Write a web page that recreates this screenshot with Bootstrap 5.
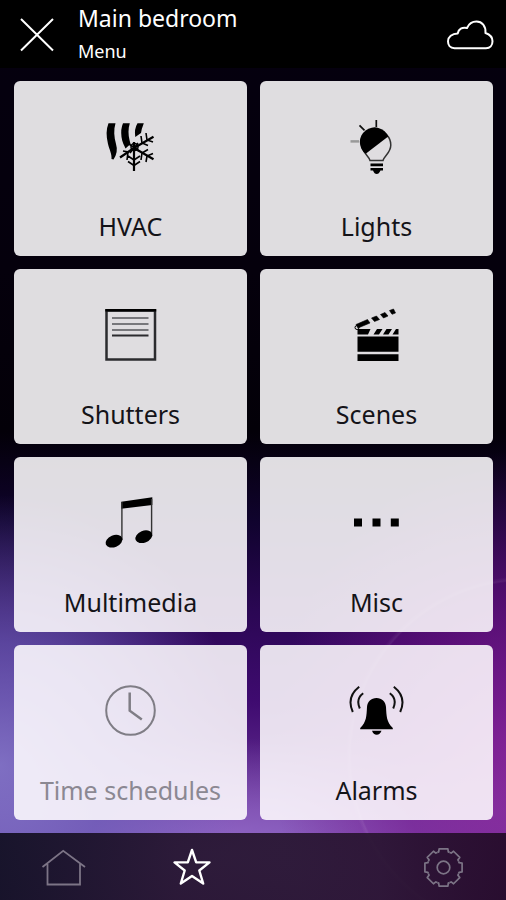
<!DOCTYPE html>
<html lang="en">
<head>
<meta charset="utf-8">
<meta name="viewport" content="width=device-width, initial-scale=1">
<title>Main bedroom</title>
<link rel="stylesheet" href="https://cdn.jsdelivr.net/npm/bootstrap@5.3.0/dist/css/bootstrap.min.css">
<style>
body { font-family: "Noto Sans", "Open Sans", sans-serif; background: #000; }
.app-shell {
  background:
    radial-gradient(circle 180px at 104% 84%, rgba(255,255,255,0) 97%, rgba(255,255,255,.07) 98%, rgba(255,255,255,0) 100%),
    radial-gradient(ellipse 48% 30% at 0% 85%, rgba(130,118,200,.9), rgba(108,95,185,.7) 45%, rgba(50,25,140,0)),
    radial-gradient(ellipse 50% 34% at 104% 84%, rgba(150,40,160,.75), rgba(120,20,140,.55) 50%, rgba(80,0,100,0)),
    radial-gradient(ellipse 90% 13% at 42% 95%, rgba(150,110,205,.95), rgba(110,60,170,0)),
    linear-gradient(180deg, #05000f 0%, #05000c 30%, #030008 48%, #10032e 58%, #2b0754 68%, #3f0b70 78%, #6b3598 90%, #6b3598 100%);
}
.top-bar { min-height: 68px; padding: 2px 12px 0 20px; gap: 24px; }
.room-name { font-size: 23px; line-height: 32px; font-weight: 400; }
.page-name { font-size: 18px; line-height: 34px; }
.tiles { padding: 13px 13px 13px 14px; gap: 13px; display: grid; grid-template-columns: 1fr 1fr; grid-auto-rows: 1fr; }
.tile {
  --bs-btn-bg: rgba(255,253,255,.875); --bs-btn-color: #141318;
  --bs-btn-hover-bg: rgba(255,255,255,.94); --bs-btn-hover-color: #000;
  --bs-btn-active-bg: #fff; --bs-btn-active-color: #000;
  --bs-btn-disabled-bg: rgba(255,253,255,.875); --bs-btn-disabled-color: #8b8892; --bs-btn-disabled-opacity: 1;
  --bs-btn-border-width: 0; --bs-btn-border-radius: 6px;
  --bs-btn-padding-x: 8px; --bs-btn-padding-y: 0;
  --bs-btn-font-size: 25px; --bs-btn-line-height: 34px;
  gap: 32px; min-height: 174px; padding-top: 36px; padding-bottom: 12px;
}
.bottom-bar { min-height: 67px; background: linear-gradient(90deg, rgba(14,12,28,.9), rgba(34,18,42,.9) 35%, rgba(36,18,42,.88) 75%, rgba(32,10,36,.9)); }
.tab-link { color: #7c7486; }
.tab-link.active { color: #fff; }
svg { display: block; }
</style>
</head>
<body>
<div class="app-shell min-vh-100 d-flex flex-column">
  <header class="top-bar bg-black text-white d-flex align-items-center">
    <button type="button" class="btn p-0 border-0 text-white" aria-label="Close">
      <svg width="34" height="34" viewBox="0 0 34 34" fill="none" stroke="currentColor" stroke-width="2"><path d="M1 1 33 32.500M33 1 1 32.500"/></svg>
    </button>
    <div class="flex-grow-1">
      <h1 class="room-name m-0">Main bedroom</h1>
      <div class="page-name">Menu</div>
    </div>
    <button type="button" class="btn p-0 border-0 text-white" aria-label="Weather">
      <svg width="48" height="32" viewBox="0 0 48 32" fill="none" stroke="currentColor" stroke-width="2" stroke-linejoin="round"><path d="M8.500 29.200C4 29.200 2 26 2 22.300C2 18 6 14.500 11.700 14.500C12.500 10 16 8 21 9C23 4.500 26.500 2.500 30.500 2.500C36 2.500 40 7 39.500 14C44 15.500 46.500 18.500 46.500 22.300C46.500 26.500 44 29.200 40 29.200Z"/></svg>
    </button>
  </header>

  <main class="tiles flex-grow-1">
    <button type="button" class="tile btn d-flex flex-column align-items-center">
      <svg width="60" height="60" viewBox="0 0 60 60" fill="#000" aria-hidden="true">
        <path d="M7.500 6.300H14.500C12.500 13 13 20 15 27Q17.500 35 12.500 42.500L10.500 42C11 37 8.500 33 7 27Q4 15 7.500 6.300ZM22 6.300H28.800C27 12 27.300 18 28.500 23L29.500 27 24.500 31.500C23.500 29 21 25 20.500 20Q19.500 12 22 6.300ZM36.500 6.300H42.800L40.800 12 40 16 34.300 20Q33 12 36.500 6.300Z"/>
        <g fill="none" stroke="#000" stroke-width="2.200">
          <path d="M33 31V54M33 31 52.500 19.800M33 31 52.500 42.300M33 31 19 40.500M33 31V25"/>
          <path stroke-width="1.600" d="M27 39 33 43 39 39M27 44.500 33 48.500 39 44.500M40 19 41 26 47 28.500M45 16 46 23 52 25M40 43 41 36 47 32.500M45 45 46 39 52 36.500M22 34 27 35 26 43M28 27 38 34M37 26 29 36"/>
          <circle cx="33.500" cy="30" r="3.500" stroke-width="1.500"/>
        </g>
      </svg>
      <span>HVAC</span>
    </button>
    <button type="button" class="tile btn d-flex flex-column align-items-center">
      <svg width="60" height="60" viewBox="0 0 60 60" aria-hidden="true">
        <path d="M23 43.500C22 39 15.200 36 15.200 28A14.300 14.300 0 0 1 43.800 28C43.800 36 37 39 36 43.500Z" fill="none" stroke="#333" stroke-width="1.500"/>
        <path d="M18.700 36.800A14.700 14.700 0 1 1 41.200 19.600Z"/>
        <path d="M23.500 46.600H36V49.300H23.500ZM23.500 51H36V53.500H33.500Q32 57 29.700 57T26 53.500H23.500Z"/>
        <path d="M29.300 3V10M12.500 8.300 17.500 13.300" stroke="#111" stroke-width="1.700"/>
        <path d="M3.500 24.400H12" stroke="#999" stroke-width="2.500"/>
      </svg>
      <span>Lights</span>
    </button>
    <button type="button" class="tile btn d-flex flex-column align-items-center">
      <svg width="60" height="60" viewBox="0 0 60 60" fill="none" aria-hidden="true">
        <path d="M5.500 5.500H54V54.500H5.500Z" stroke="#2b2b2e" stroke-width="2.500"/>
        <path d="M4.300 5.300H55.200" stroke="#000" stroke-width="2.500"/>
        <path d="M11 13H47.500M11 19H47.500M11 25H47.500" stroke="#77777b" stroke-width="2"/>
        <path d="M11 30.400H47.500" stroke="#2b2b2e" stroke-width="2"/>
      </svg>
      <span>Shutters</span>
    </button>
    <button type="button" class="tile btn d-flex flex-column align-items-center">
      <svg width="60" height="60" viewBox="0 0 60 60" aria-hidden="true">
        <path d="M10.500 31.500H51.500V46.800H10.500ZM10.500 49.200H51.500V56H10.500Z"/>
        <path d="M10.500 24H23.500L21 29.500H10.500ZM30 24H35.500L32 29.500H26.500ZM39.500 24H45L41.500 29.500H36ZM49 24H51.500V29.500H45.500Z"/>
        <path d="M9 19.500 20.500 14.500 23 18 11 23ZM24.500 13 29.500 11 32.500 14.500 27.500 16.500ZM33.500 9.500 38 7.500 41 11 36.500 13ZM42.500 5.500 46.500 4 48.500 8 45 9.300Z" stroke="#000" stroke-width=".6"/>
        <circle cx="10" cy="22.500" r="2" fill="none" stroke="#000"/>
      </svg>
      <span>Scenes</span>
    </button>
    <button type="button" class="tile btn d-flex flex-column align-items-center">
      <svg width="60" height="60" viewBox="0 0 60 60" aria-hidden="true">
        <path d="M20.200 8.700 51.300 4.300V12L20.200 15.800Z"/>
        <path d="M20.900 9V47M50.600 6V43" stroke="#333" stroke-width="1.400"/>
        <ellipse cx="13" cy="48.200" rx="8.800" ry="5.900" transform="rotate(-22 13 48.200)"/>
        <ellipse cx="42.800" cy="43.700" rx="8.800" ry="5.900" transform="rotate(-22 42.800 43.700)"/>
      </svg>
      <span>Multimedia</span>
    </button>
    <button type="button" class="tile btn d-flex flex-column align-items-center">
      <svg width="60" height="60" viewBox="0 0 60 60" aria-hidden="true"><path d="M7 25.500h8v8h-8zM25.500 25.500h8v8h-8zM43.800 25.500h8v8h-8z"/></svg>
      <span>Misc</span>
    </button>
    <button type="button" class="tile btn d-flex flex-column align-items-center" disabled>
      <svg width="60" height="60" viewBox="0 0 60 60" fill="none" stroke="#7f7d85" aria-hidden="true">
        <circle cx="29.500" cy="29.500" r="24.300" stroke-width="2"/>
        <path d="M28.700 11.500V29.700L40.800 38.500" stroke-width="2.500"/>
      </svg>
      <span>Time schedules</span>
    </button>
    <button type="button" class="tile btn d-flex flex-column align-items-center">
      <svg width="60" height="60" viewBox="0 0 60 60" aria-hidden="true">
        <path d="M29.500 17C35 17 38.500 20.500 39 26C39.500 35 39.500 41 45.800 47V48.300H13.200V47C19.500 41 19.500 35 20 26C20.500 20.500 24 17 29.500 17ZM25 49.700H34.500Q33 53.700 29.700 53.700T25 49.700Z"/>
        <path d="M12.200 5.700Q-1 16 5.800 31M16.200 12.300Q8.500 18 12.800 27.500M46.800 5.700Q60 16 53.200 31M42.800 12.300Q50.500 18 46.200 27.500" fill="none" stroke="#111" stroke-width="2"/>
      </svg>
      <span>Alarms</span>
    </button>
  </main>

  <nav class="bottom-bar d-flex align-items-center" aria-label="Sections">
    <div class="row g-0 w-100">
      <div class="col-3 d-flex justify-content-center">
        <a href="#home" class="tab-link" aria-label="Home"><svg width="48" height="48" viewBox="0 0 48 48" fill="none" stroke="currentColor" stroke-width="1.800"><path d="M3.500 24 24.200 7.800 46 24M8.500 21V41.500H41V21"/></svg></a>
      </div>
      <div class="col-3 d-flex justify-content-center">
        <a href="#favourites" class="tab-link active" aria-current="page" aria-label="Favourites"><svg width="48" height="48" viewBox="0 0 48 48" fill="none" stroke="currentColor" stroke-width="2.400" stroke-linejoin="round"><path d="M26 7 30.200 19.400H43.500L33.300 27.500 37.200 40.500 26 33 14.800 40.500 18.700 27.500 8.500 19.400H21.800Z"/></svg></a>
      </div>
      <div class="col-3 offset-3 d-flex justify-content-center">
        <a href="#settings" class="tab-link" aria-label="Settings"><svg width="48" height="48" viewBox="0 0 48 48" fill="none" stroke="currentColor" stroke-width="1.700" stroke-linejoin="round">
          <defs><path id="tooth" d="M-6.200-15.100-4.800-15.600-4.400-18.600H4.400L4.800-15.600 6.200-15.100"/></defs>
          <g transform="translate(24.500 24.500)"><circle r="6.300"/><use href="#tooth"/><use href="#tooth" transform="rotate(45)"/><use href="#tooth" transform="rotate(90)"/><use href="#tooth" transform="rotate(135)"/><use href="#tooth" transform="rotate(180)"/><use href="#tooth" transform="rotate(225)"/><use href="#tooth" transform="rotate(270)"/><use href="#tooth" transform="rotate(315)"/></g></svg></a>
      </div>
    </div>
  </nav>
</div>
<script src="https://cdn.jsdelivr.net/npm/bootstrap@5.3.0/dist/js/bootstrap.bundle.min.js"></script>
</body>
</html>
